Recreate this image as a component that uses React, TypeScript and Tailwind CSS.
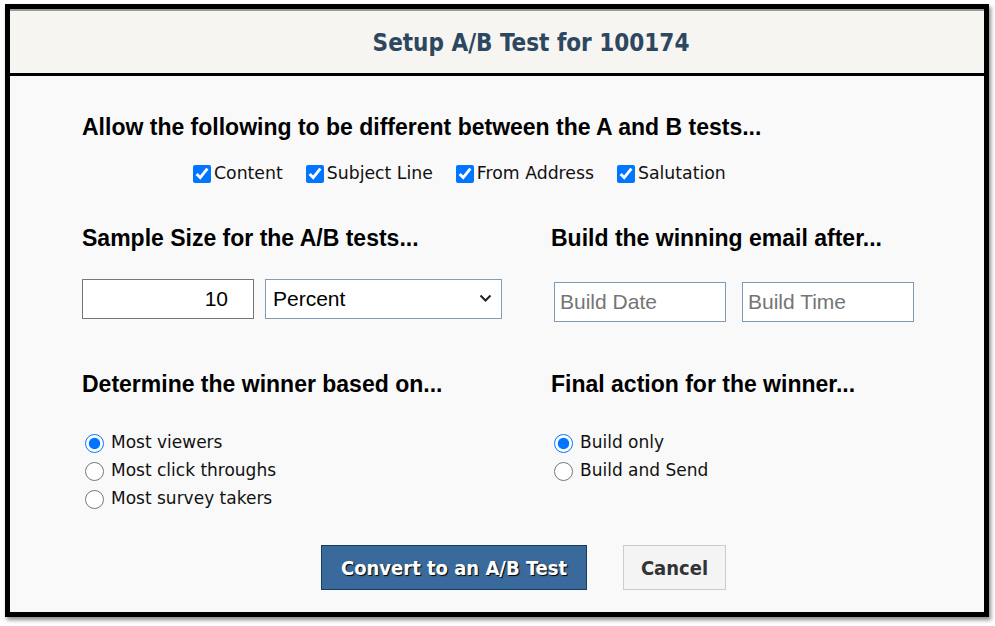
import React from "react";

const cond = { fontFamily: "'DejaVu Sans Condensed', 'DejaVu Sans', sans-serif", fontStretch: "condensed" as const };

function Check({ label }: { label: string }) {
  return (
    <label className="flex items-center gap-[3px]">
      <input type="checkbox" defaultChecked className="w-[18px] h-[18px] m-0 accent-[#0075ff]" />
      <span>{label}</span>
    </label>
  );
}

function Radio({ label, name, checked }: { label: string; name: string; checked?: boolean }) {
  return (
    <label className="flex items-center h-[28px] gap-[7px]">
      <input type="radio" name={name} defaultChecked={checked} className="w-[19px] h-[19px] m-0 ml-[3px] accent-[#0075ff]" />
      <span>{label}</span>
    </label>
  );
}

export default function App() {
  return (
    <div className="w-[995px] h-[626px] bg-white pt-[4px] pl-[5px]">
      <div className="w-[984px] h-[613px] border-[5px] border-black bg-[#f9f9f9] flex flex-col shadow-[2px_3px_4px_rgba(0,0,0,0.45)]">
        <div className="h-[67px] shrink-0 bg-[#f6f5f1] border-t-2 border-t-[#9a9a9a] border-b-[3px] border-b-black flex items-center justify-center pl-[68px] pt-[2px]">
          <h1 className="text-[24px] font-bold text-[#2d4760] leading-none" style={cond}>Setup A/B Test for 100174</h1>
        </div>
        <div className="pl-[72px] pt-[38px] text-black" style={{ fontFamily: "'Liberation Sans', Arial, sans-serif" }}>
          <h2 className="text-[23px] font-bold leading-[26px]">Allow the following to be different between the A and B tests...</h2>
          <div className="flex gap-[23px] mt-[22px] pl-[111px] h-[24px] text-[17.3px] text-[#111]" style={{ fontFamily: "'DejaVu Sans', sans-serif" }}>
            <Check label="Content" />
            <Check label="Subject Line" />
            <Check label="From Address" />
            <Check label="Salutation" />
          </div>
          <div className="grid grid-cols-[469px_1fr] mt-[39px]">
            <div>
              <h2 className="text-[23px] font-bold leading-[26px]">Sample Size for the A/B tests...</h2>
              <div className="flex gap-[11px] mt-[28px]">
                <input
                  type="text"
                  defaultValue="10"
                  className="w-[172px] h-[40px] border border-[#767676] bg-white text-right pr-[25px] text-[21px] outline-none"
                />
                <div className="relative w-[237px] h-[40px] border border-[#7f9db9] bg-white flex items-center pl-[7px] text-[21px]">
                  <span>Percent</span>
                  <svg className="absolute right-[9px] top-[14px]" width="13" height="9" viewBox="0 0 13 9">
                    <path d="M1.5 1.5 L6.5 6.5 L11.5 1.5" fill="none" stroke="#222" strokeWidth="2" />
                  </svg>
                </div>
              </div>
            </div>
            <div>
              <h2 className="text-[23px] font-bold leading-[26px]">Build the winning email after...</h2>
              <div className="flex gap-[16px] mt-[31px] ml-[3px]">
                <input
                  type="text"
                  placeholder="Build Date"
                  className="w-[172px] h-[40px] border border-[#7f9ab5] bg-white pl-[5px] text-[21px] placeholder:text-[#757575] outline-none"
                />
                <input
                  type="text"
                  placeholder="Build Time"
                  className="w-[172px] h-[40px] border border-[#7f9ab5] bg-white pl-[5px] text-[21px] placeholder:text-[#757575] outline-none"
                />
              </div>
            </div>
          </div>
          <div className="grid grid-cols-[469px_1fr] mt-[49px]">
            <div>
              <h2 className="text-[23px] font-bold leading-[26px]">Determine the winner based on...</h2>
              <div className="mt-[32px] text-[17px] text-[#111]" style={{ fontFamily: "'DejaVu Sans', sans-serif" }}>
                <Radio name="winner" label="Most viewers" checked />
                <Radio name="winner" label="Most click throughs" />
                <Radio name="winner" label="Most survey takers" />
              </div>
            </div>
            <div>
              <h2 className="text-[23px] font-bold leading-[26px]">Final action for the winner...</h2>
              <div className="mt-[32px] text-[17px] text-[#111]" style={{ fontFamily: "'DejaVu Sans', sans-serif" }}>
                <Radio name="action" label="Build only" checked />
                <Radio name="action" label="Build and Send" />
              </div>
            </div>
          </div>
          <div className="flex gap-[36px] mt-[32px] pl-[239px]">
            <button
              className="w-[266px] h-[45px] bg-[#3a6a9c] border border-[#163c5e] text-white text-[20px] font-bold [text-shadow:1px_1px_1px_#000]"
              style={cond}
            >
              Convert to an A/B Test
            </button>
            <button
              className="w-[103px] h-[45px] bg-[#f4f4f4] border border-[#cccccc] text-[#333] text-[20px] font-bold"
              style={cond}
            >
              Cancel
            </button>
          </div>
        </div>
      </div>
    </div>
  );
}
